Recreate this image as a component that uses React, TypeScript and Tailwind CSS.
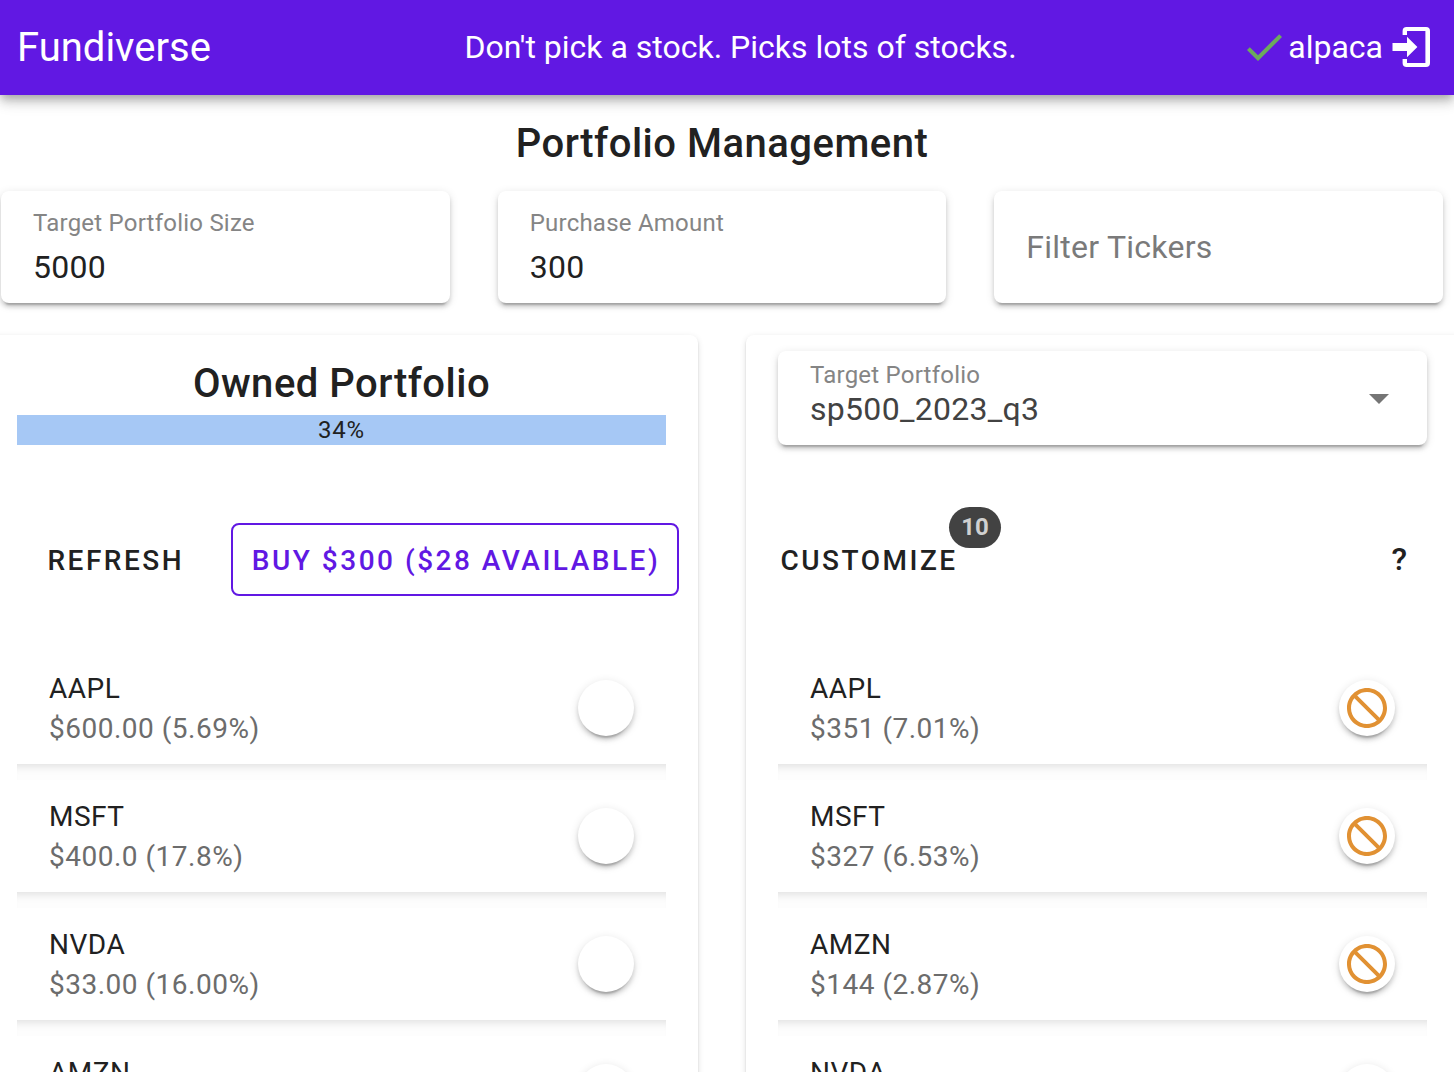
type Holding = { ticker: string; detail: string };

const owned: Holding[] = [
  { ticker: "AAPL", detail: "$600.00 (5.69%)" },
  { ticker: "MSFT", detail: "$400.0 (17.8%)" },
  { ticker: "NVDA", detail: "$33.00 (16.00%)" },
  { ticker: "AMZN", detail: "" },
];

const target: Holding[] = [
  { ticker: "AAPL", detail: "$351 (7.01%)" },
  { ticker: "MSFT", detail: "$327 (6.53%)" },
  { ticker: "AMZN", detail: "$144 (2.87%)" },
  { ticker: "NVDA", detail: "" },
];

const raised =
  "rounded-lg bg-white shadow-[0_6px_2px_-4px_rgba(0,0,0,0.2),0_4px_4px_0_rgba(0,0,0,0.14),0_2px_10px_0_rgba(0,0,0,0.12)]";
const panel =
  "h-[760px] shrink-0 rounded-lg bg-white shadow-[0_4px_2px_-2px_rgba(0,0,0,0.2),0_2px_2px_0_rgba(0,0,0,0.14),0_2px_6px_0_rgba(0,0,0,0.12)]";

function Icon({ d, className }: { d: string; className: string }) {
  return (
    <svg viewBox="0 0 24 24" fill="currentColor" className={`size-12 shrink-0 ${className}`}>
      <path d={d} />
    </svg>
  );
}

const CHECK = "M21,7L9,19L3.5,13.5L4.91,12.09L9,16.17L19.59,5.59L21,7Z";
const LOGIN =
  "M10,17.1V14H2.75V10H10V6.9L15.2,12L10,17.1M9.8,2H19.5A2,2 0 0,1 21.5,4V20A2,2 0 0,1 19.5,22H9.8A2,2 0 0,1 7.8,20V18H10V20H19.2V4H10V6H7.8V4A2,2 0 0,1 9.8,2Z";
const CANCEL =
  "M12 2C17.5 2 22 6.5 22 12S17.5 22 12 22 2 17.5 2 12 6.5 2 12 2M12 4C10.1 4 8.4 4.6 7.1 5.7L18.3 16.9C19.3 15.5 20 13.8 20 12C20 7.6 16.4 4 12 4M16.9 18.3L5.7 7.1C4.6 8.4 4 10.1 4 12C4 16.4 7.6 20 12 20C13.9 20 15.6 19.4 16.9 18.3Z";

function Field({ label, value }: { label: string; value: string }) {
  return (
    <div className={`h-28 flex-1 px-8 pt-4 ${raised}`}>
      <div className="text-[24px] leading-8 tracking-[0.225px] text-[#858585]">{label}</div>
      <div className="mt-2 text-[32px] leading-10 tracking-[0.3px] text-[#212121]">{value}</div>
    </div>
  );
}

function Rows({ items, banned }: { items: Holding[]; banned: boolean }) {
  return (
    <div>
      {items.map((h) => (
        <div key={h.ticker}>
          <div className="flex h-28 items-center justify-between px-8">
            <div className="h-20 pt-px text-[28px] leading-10 tracking-[0.5px]">
              <div className="text-[#212121]">{h.ticker}</div>
              <div className="text-[#6c6c6c]">{h.detail}</div>
            </div>
            <div className="flex size-14 items-center justify-center rounded-full bg-white shadow-[0_6px_2px_-4px_rgba(0,0,0,0.2),0_4px_4px_0_rgba(0,0,0,0.14),0_2px_10px_0_rgba(0,0,0,0.12)]">
              {banned && <Icon d={CANCEL} className="text-[#e19133]" />}
            </div>
          </div>
          <div className="h-4 bg-[#fdfdfd] shadow-[inset_0_10px_10px_-8px_rgba(0,0,0,0.13)]" />
        </div>
      ))}
    </div>
  );
}

export default function App() {
  return (
    <div className="h-[1072px] w-[1454px] overflow-hidden bg-white font-[Roboto,sans-serif] text-[#212121]">
      <header className="relative flex h-[95px] items-center bg-[#6118e3] text-[32px] leading-10 text-white shadow-[0_4px_8px_-2px_rgba(0,0,0,0.2),0_8px_10px_0_rgba(0,0,0,0.14),0_2px_20px_0_rgba(0,0,0,0.12)]">
        <div className="w-[447px] pl-[17px] text-[40px]">Fundiverse</div>
        <div className="flex-1 pb-0.5 pl-[17.5px]">Don't pick a stock. Picks lots of stocks.</div>
        <div className="flex items-center pb-px pr-[19px]">
          <Icon d={CHECK} className="text-[#6cab5c]" />
          <span className="pb-px">alpaca</span>
          <Icon d={LOGIN} className="ml-1" />
        </div>
      </header>

      <h1 className="mt-[25px] pr-2.5 text-center text-[40px] font-medium leading-[48px] tracking-[0.5px]">
        Portfolio Management
      </h1>

      <div className="mt-[23px] flex gap-12 pl-px pr-[11px]">
        <Field label="Target Portfolio Size" value="5000" />
        <Field label="Purchase Amount" value="300" />
        <div className={`flex h-28 flex-1 items-center px-8 text-[32px] tracking-[0.25px] text-[#7a7a7a] ${raised}`}>
          Filter Tickers
        </div>
      </div>

      <div className="mt-8 flex gap-12">
        <section className={`-ml-4 w-[714px] pl-[33px] pr-8 pt-[25px] ${panel}`}>
          <h2 className="text-center text-[40px] font-medium leading-[48px] tracking-[0.5px]">Owned Portfolio</h2>
          <div className="mt-[7px] h-[30px] bg-[#a6c8f5] text-center text-[24px] leading-[30px] tracking-[0.8px]">34%</div>
          <div className="-mr-4 mt-[78px] flex h-[73px] items-center justify-between pl-[30.5px] pr-[3px] text-[28px] font-medium tracking-[2.5px]">
            <button className="pt-0.5">REFRESH</button>
            <button className="h-[73px] w-[448px] whitespace-nowrap rounded-lg border-2 border-[#6118e3] pl-0.5 pt-0.5 tracking-[2.5px] text-[#6118e3]">
              BUY $300 ($28 AVAILABLE)
            </button>
          </div>
          <div className="mt-14">
            <Rows items={owned} banned={false} />
          </div>
        </section>

        <section className={`w-[724px] pl-8 pr-[43px] pt-4 ${panel}`}>
          <div className={`flex h-[94px] items-start justify-between pl-8 pr-6 pt-2 ${raised}`}>
            <div>
              <div className="text-[24px] leading-8 tracking-[0.225px] text-[#858585]">Target Portfolio</div>
              <div className="text-[32px] leading-9 tracking-[0.3px] text-[#424242]">sp500_2023_q3</div>
            </div>
            <Icon d="M7,10L12,15L17,10H7Z" className="mt-[15px] text-[#757575]" />
          </div>
          <div className="mt-[78px] flex h-[73px] items-center justify-between pl-[2.5px] pr-[17.5px] text-[28px] font-medium tracking-[2.5px]">
            <button className="relative pt-0.5">
              CUSTOMIZE
              <span className="absolute -top-[31px] left-[168.5px] flex h-[41px] w-[52px] items-center justify-center rounded-full bg-[#424242] text-[24px] font-bold tracking-normal text-[#d0d0d0]">
                10
              </span>
            </button>
            <button className="pb-0.5 text-[32px]">?</button>
          </div>
          <div className="mt-14">
            <Rows items={target} banned />
          </div>
        </section>
      </div>
    </div>
  );
}
